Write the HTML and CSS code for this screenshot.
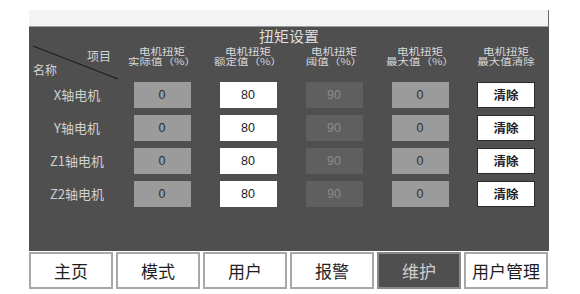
FILE: index.html
```html
<!DOCTYPE html>
<html lang="zh">
<head>
<meta charset="utf-8">
<title>扭矩设置</title>
<link rel="stylesheet" href="styles.css">
</head>
<body>
<div class="screen">
  <div class="strip"></div>
  <div class="panel">
    <div class="title">扭矩设置</div>
    <div class="grid head">
      <div class="diag">
        <svg class="diag-line" width="90" height="38" viewBox="0 0 90 38"><line x1="4" y1="2" x2="89" y2="35" stroke="#1e1e1e" stroke-width="1.2"/></svg>
        <span class="item">项目</span>
        <span class="name">名称</span>
      </div>
      <div class="colhead"><span class="ln">电机扭矩</span><span class="ln">实际值（%）</span></div>
      <div class="colhead"><span class="ln">电机扭矩</span><span class="ln">额定值（%）</span></div>
      <div class="colhead"><span class="ln">电机扭矩</span><span class="ln">阈值（%）</span></div>
      <div class="colhead"><span class="ln">电机扭矩</span><span class="ln">最大值（%）</span></div>
      <div class="colhead"><span class="ln">电机扭矩</span><span class="ln">最大值清除</span></div>
    </div>
    <div class="grid row">
      <div class="label">X轴电机</div>
      <div class="cell"><span class="box gray">0</span></div>
      <div class="cell"><span class="box white">80</span></div>
      <div class="cell"><span class="box dim">90</span></div>
      <div class="cell"><span class="box gray">0</span></div>
      <div class="cell"><span class="box clear">清除</span></div>
    </div>
    <div class="grid row">
      <div class="label">Y轴电机</div>
      <div class="cell"><span class="box gray">0</span></div>
      <div class="cell"><span class="box white">80</span></div>
      <div class="cell"><span class="box dim">90</span></div>
      <div class="cell"><span class="box gray">0</span></div>
      <div class="cell"><span class="box clear">清除</span></div>
    </div>
    <div class="grid row">
      <div class="label">Z1轴电机</div>
      <div class="cell"><span class="box gray">0</span></div>
      <div class="cell"><span class="box white">80</span></div>
      <div class="cell"><span class="box dim">90</span></div>
      <div class="cell"><span class="box gray">0</span></div>
      <div class="cell"><span class="box clear">清除</span></div>
    </div>
    <div class="grid row">
      <div class="label">Z2轴电机</div>
      <div class="cell"><span class="box gray">0</span></div>
      <div class="cell"><span class="box white">80</span></div>
      <div class="cell"><span class="box dim">90</span></div>
      <div class="cell"><span class="box gray">0</span></div>
      <div class="cell"><span class="box clear">清除</span></div>
    </div>
  </div>
  <div class="nav">
    <div class="btn">主页</div>
    <div class="btn">模式</div>
    <div class="btn">用户</div>
    <div class="btn">报警</div>
    <div class="btn active">维护</div>
    <div class="btn">用户管理</div>
  </div>
</div>
</body>
</html>
```

FILE: styles.css
```css
html, body {
  margin: 0;
  padding: 0;
  background: #ffffff;
}
body {
  font-family: "Noto Sans CJK SC", "Liberation Sans", sans-serif;
}
.screen {
  margin: 10px 0 0 29px;
  width: 520px;
}
.strip {
  height: 16px;
  background: #f3f3f3;
  border-bottom: 1px solid #9a9a9a;
  border-right: 1px solid #6a6a6a;
}
.panel {
  height: 224px;
  background: #4f4f4f;
  display: flex;
  flex-direction: column;
}
.title {
  height: 17px;
  line-height: 17px;
  font-size: 15px;
  text-align: center;
  color: #dcdcdc;
}
.grid {
  display: grid;
  grid-template-columns: 90px repeat(5, 86px);
}
.head {
  height: 36px;
  margin-bottom: 2px;
}
.diag {
  position: relative;
  font-size: 12px;
  color: #d4d4d4;
}
.diag-line {
  position: absolute;
  left: 0;
  top: 0;
}
.item {
  position: absolute;
  right: 8px;
  top: 5px;
  line-height: 14px;
}
.name {
  position: absolute;
  left: 4px;
  top: 19px;
  line-height: 14px;
}
.colhead {
  display: flex;
  flex-direction: column;
  align-items: center;
  font-size: 11.5px;
  color: #d8d8d8;
  padding-top: 2px;
  white-space: nowrap;
  transform: scaleY(0.82);
  transform-origin: center top;
}
.ln {
  display: block;
  height: 13.4px;
  line-height: 13.4px;
}
.row {
  height: 33px;
}
.label {
  font-size: 13px;
  color: #d0d0d0;
  line-height: 26px;
  text-align: center;
  padding-left: 6px;
}
.cell {
  display: flex;
  justify-content: center;
}
.box {
  width: 57px;
  height: 26px;
  line-height: 26px;
  text-align: center;
  font-size: 12.5px;
  font-family: "Liberation Sans", "Noto Sans CJK SC", sans-serif;
  box-sizing: border-box;
}
.gray {
  background: #9b9b9b;
  color: #2e2e2e;
}
.white {
  background: #ffffff;
  color: #222222;
}
.dim {
  background: #5f5f5f;
  color: #8c8c8c;
}
.clear {
  width: 58px;
  background: #ffffff;
  color: #222222;
  border: 1px solid #2a2a2a;
  line-height: 24px;
  font-size: 12.5px;
  font-family: "Noto Sans CJK SC", sans-serif;
  font-weight: bold;
}
.nav {
  display: flex;
  gap: 3px;
  margin-top: 1px;
}
.btn {
  width: 84px;
  height: 37px;
  box-sizing: border-box;
  border: 2px solid #a8a8a8;
  background: #ffffff;
  color: #1e1e1e;
  font-size: 17px;
  line-height: 33px;
  text-align: center;
}
.btn.active {
  background: #4f4f4f;
  color: #cfcfcf;
  border-color: #8a8a8a;
}
```
